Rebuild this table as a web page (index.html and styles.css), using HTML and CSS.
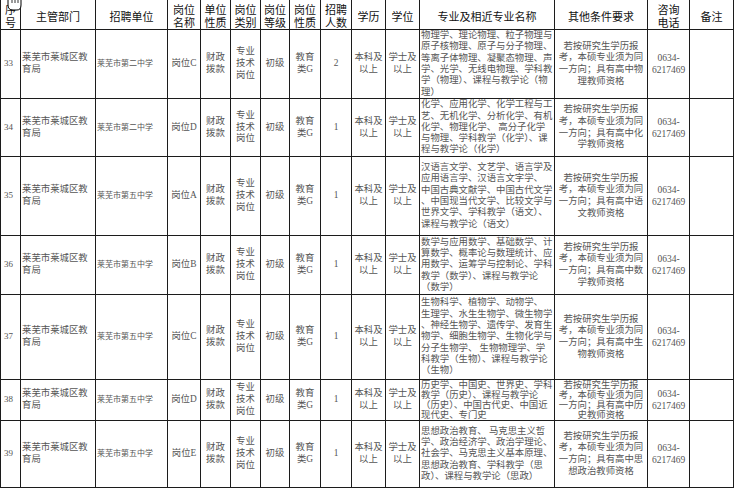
FILE: index.html
```html
<!DOCTYPE html>
<html lang="zh-CN">
<head>
<meta charset="utf-8">
<title>招聘岗位表</title>
<link rel="stylesheet" href="styles.css">
</head>
<body>
<div class="page">
  <svg class="cursor" width="22" height="14" viewBox="0 0 22 14">
    <path d="M6 0 L6 6 Q6 11 11 11 L15 11 Q19 11 19 6 L19 0 Z" fill="#fff" stroke="#000" stroke-width="1"/>
    <path d="M10 0 L10 4 M13 0 L13 4 M16 0 L16 4" stroke="#000" stroke-width="0.8" fill="none"/>
  </svg>
  <div class="sheet">
    <div class="h">序<br>号</div>
    <div class="h">主管部门</div>
    <div class="h">招聘单位</div>
    <div class="h">岗位<br>名称</div>
    <div class="h">单位<br>性质</div>
    <div class="h">岗位<br>类别</div>
    <div class="h">岗位<br>等级</div>
    <div class="h">岗位<br>性质</div>
    <div class="h">招聘<br>人数</div>
    <div class="h">学历</div>
    <div class="h">学位</div>
    <div class="h">专业及相近专业名称</div>
    <div class="h">其他条件要求</div>
    <div class="h">咨询<br>电话</div>
    <div class="h">备注</div>

    <!-- 33 -->
    <div class="c num">33</div>
    <div class="c l dept">莱芜市莱城区教<br>育局</div>
    <div class="c l unit">莱芜市第二中学</div>
    <div class="c">岗位C</div>
    <div class="c">财政<br>拨款</div>
    <div class="c">专业<br>技术<br>岗位</div>
    <div class="c">初级</div>
    <div class="c">教育<br>类G</div>
    <div class="c">2</div>
    <div class="c">本科及<br>以上</div>
    <div class="c">学士及<br>以上</div>
    <div class="c l major">物理学、理论物理、粒子物理与<br>原子核物理、原子与分子物理、<br>等离子体物理、凝聚态物理、声<br>学、光学、无线电物理、学科教<br>学（物理）、课程与教学论（物<br>理）</div>
    <div class="c cond">若按研究生学历报<br>考，本硕专业须为同<br>一方向；具有高中物<br>理教师资格</div>
    <div class="c tel">0634-<br>6217469</div>
    <div class="c"></div>

    <!-- 34 -->
    <div class="c num">34</div>
    <div class="c l dept">莱芜市莱城区教<br>育局</div>
    <div class="c l unit">莱芜市第二中学</div>
    <div class="c">岗位D</div>
    <div class="c">财政<br>拨款</div>
    <div class="c">专业<br>技术<br>岗位</div>
    <div class="c">初级</div>
    <div class="c">教育<br>类G</div>
    <div class="c">1</div>
    <div class="c">本科及<br>以上</div>
    <div class="c">学士及<br>以上</div>
    <div class="c l major">化学、应用化学、化学工程与工<br>艺、无机化学、分析化学、有机<br>化学、物理化学、 高分子化学<br>与物理、学科教学（化学）、课<br>程与教学论（化学）</div>
    <div class="c cond">若按研究生学历报<br>考，本硕专业须为同<br>一方向；具有高中化<br>学教师资格</div>
    <div class="c tel">0634-<br>6217469</div>
    <div class="c"></div>

    <!-- 35 -->
    <div class="c num">35</div>
    <div class="c l dept">莱芜市莱城区教<br>育局</div>
    <div class="c l unit">莱芜市第五中学</div>
    <div class="c">岗位A</div>
    <div class="c">财政<br>拨款</div>
    <div class="c">专业<br>技术<br>岗位</div>
    <div class="c">初级</div>
    <div class="c">教育<br>类G</div>
    <div class="c">1</div>
    <div class="c">本科及<br>以上</div>
    <div class="c">学士及<br>以上</div>
    <div class="c l major">汉语言文学、文艺学、语言学及<br>应用语言学、汉语言文字学、<br>中国古典文献学、中国古代文学<br>、中国现当代文学、比较文学与<br>世界文学、学科教学（语文）、<br>课程与教学论（语文）</div>
    <div class="c cond">若按研究生学历报<br>考，本硕专业须为同<br>一方向；具有高中语<br>文教师资格</div>
    <div class="c tel">0634-<br>6217469</div>
    <div class="c"></div>

    <!-- 36 -->
    <div class="c num">36</div>
    <div class="c l dept">莱芜市莱城区教<br>育局</div>
    <div class="c l unit">莱芜市第五中学</div>
    <div class="c">岗位B</div>
    <div class="c">财政<br>拨款</div>
    <div class="c">专业<br>技术<br>岗位</div>
    <div class="c">初级</div>
    <div class="c">教育<br>类G</div>
    <div class="c">1</div>
    <div class="c">本科及<br>以上</div>
    <div class="c">学士及<br>以上</div>
    <div class="c l major">数学与应用数学、基础数学、计<br>算数学、概率论与数理统计、应<br>用数学、运筹学与控制论、学科<br>教学（数学）、课程与教学论<br>（数学）</div>
    <div class="c cond">若按研究生学历报<br>考，本硕专业须为同<br>一方向；具有高中数<br>学教师资格</div>
    <div class="c tel">0634-<br>6217469</div>
    <div class="c"></div>

    <!-- 37 -->
    <div class="c num">37</div>
    <div class="c l dept">莱芜市莱城区教<br>育局</div>
    <div class="c l unit">莱芜市第五中学</div>
    <div class="c">岗位C</div>
    <div class="c">财政<br>拨款</div>
    <div class="c">专业<br>技术<br>岗位</div>
    <div class="c">初级</div>
    <div class="c">教育<br>类G</div>
    <div class="c">1</div>
    <div class="c">本科及<br>以上</div>
    <div class="c">学士及<br>以上</div>
    <div class="c l major">生物科学、植物学、动物学、<br>生理学、水生生物学、微生物学<br>、神经生物学、遗传学、发育生<br>物学、细胞生物学、生物化学与<br>分子生物学、 生物物理学、学<br>科教学（生物）、课程与教学论<br>（生物）</div>
    <div class="c cond">若按研究生学历报<br>考，本硕专业须为同<br>一方向；具有高中生<br>物教师资格</div>
    <div class="c tel">0634-<br>6217469</div>
    <div class="c"></div>

    <!-- 38 -->
    <div class="c num">38</div>
    <div class="c l dept">莱芜市莱城区教<br>育局</div>
    <div class="c l unit">莱芜市第五中学</div>
    <div class="c">岗位D</div>
    <div class="c">财政<br>拨款</div>
    <div class="c">专业<br>技术<br>岗位</div>
    <div class="c">初级</div>
    <div class="c">教育<br>类G</div>
    <div class="c">1</div>
    <div class="c">本科及<br>以上</div>
    <div class="c">学士及<br>以上</div>
    <div class="c l major tight">历史学、中国史、世界史、学科<br>教学（历史）、课程与教学论<br>（历史）、中国古代史、中国近<br>现代史、专门史</div>
    <div class="c cond tight">若按研究生学历报<br>考，本硕专业须为同<br>一方向；具有高中历<br>史教师资格</div>
    <div class="c tel">0634-<br>6217469</div>
    <div class="c"></div>

    <!-- 39 -->
    <div class="c num">39</div>
    <div class="c l dept">莱芜市莱城区教<br>育局</div>
    <div class="c l unit">莱芜市第五中学</div>
    <div class="c">岗位E</div>
    <div class="c">财政<br>拨款</div>
    <div class="c">专业<br>技术<br>岗位</div>
    <div class="c">初级</div>
    <div class="c">教育<br>类G</div>
    <div class="c">1</div>
    <div class="c">本科及<br>以上</div>
    <div class="c">学士及<br>以上</div>
    <div class="c l major">思想政治教育、 马克思主义哲<br>学、政治经济学、政治学理论、<br>社会学、马克思主义基本原理、<br>思想政治教育、学科教学（思<br>政）、课程与教学论（思政）</div>
    <div class="c cond">若按研究生学历报<br>考，本硕专业须为同<br>一方向；具有高中思<br>想政治教师资格</div>
    <div class="c tel">0634-<br>6217469</div>
    <div class="c"></div>
  </div>
</div>
</body>
</html>
```
FILE: styles.css
```css
html, body {
  margin: 0;
  padding: 0;
  background: #fff;
}

.page {
  position: relative;
  width: 736px;
  height: 489px;
  overflow: hidden;
}

.sheet {
  display: grid;
  grid-template-columns: 19px 74px 71px 32px 29px 29px 28px 30px 30px 33px 33px 134px 92px 41px 43px;
  grid-template-rows: 29px 68px 57px 78px 58px 84px 40px 66px;
  gap: 1px;
  padding: 1px;
  width: max-content;
  margin-top: -1px;
  background: #1c1c1c;
}

.h {
  background: #fff;
  display: flex;
  align-items: center;
  justify-content: center;
  text-align: center;
  padding-top: 3px;
  box-sizing: border-box;
  font-family: "Noto Sans CJK SC", "Noto Sans", sans-serif;
  font-size: 11px;
  line-height: 13px;
  color: #111;
  overflow: hidden;
  white-space: nowrap;
}

.c {
  background: #fff;
  display: flex;
  align-items: center;
  justify-content: center;
  text-align: center;
  overflow: hidden;
  white-space: nowrap;
  font-family: "Liberation Serif", "Noto Sans CJK SC", serif;
  font-size: 9.4px;
  line-height: 11.7px;
  color: #555;
}

.c.l {
  justify-content: flex-start;
  text-align: left;
  padding-left: 1px;
}

.unit {
  font-size: 8px;
}

.num {
  font-size: 9px;
  justify-content: flex-start;
  padding-left: 3px;
}

.major {
  line-height: 11.3px;
}

.c.tight {
  line-height: 10px;
}

.tel {
  font-size: 9.5px;
  line-height: 12px;
}

.cursor {
  position: absolute;
  left: 2px;
  top: -1px;
}
```
